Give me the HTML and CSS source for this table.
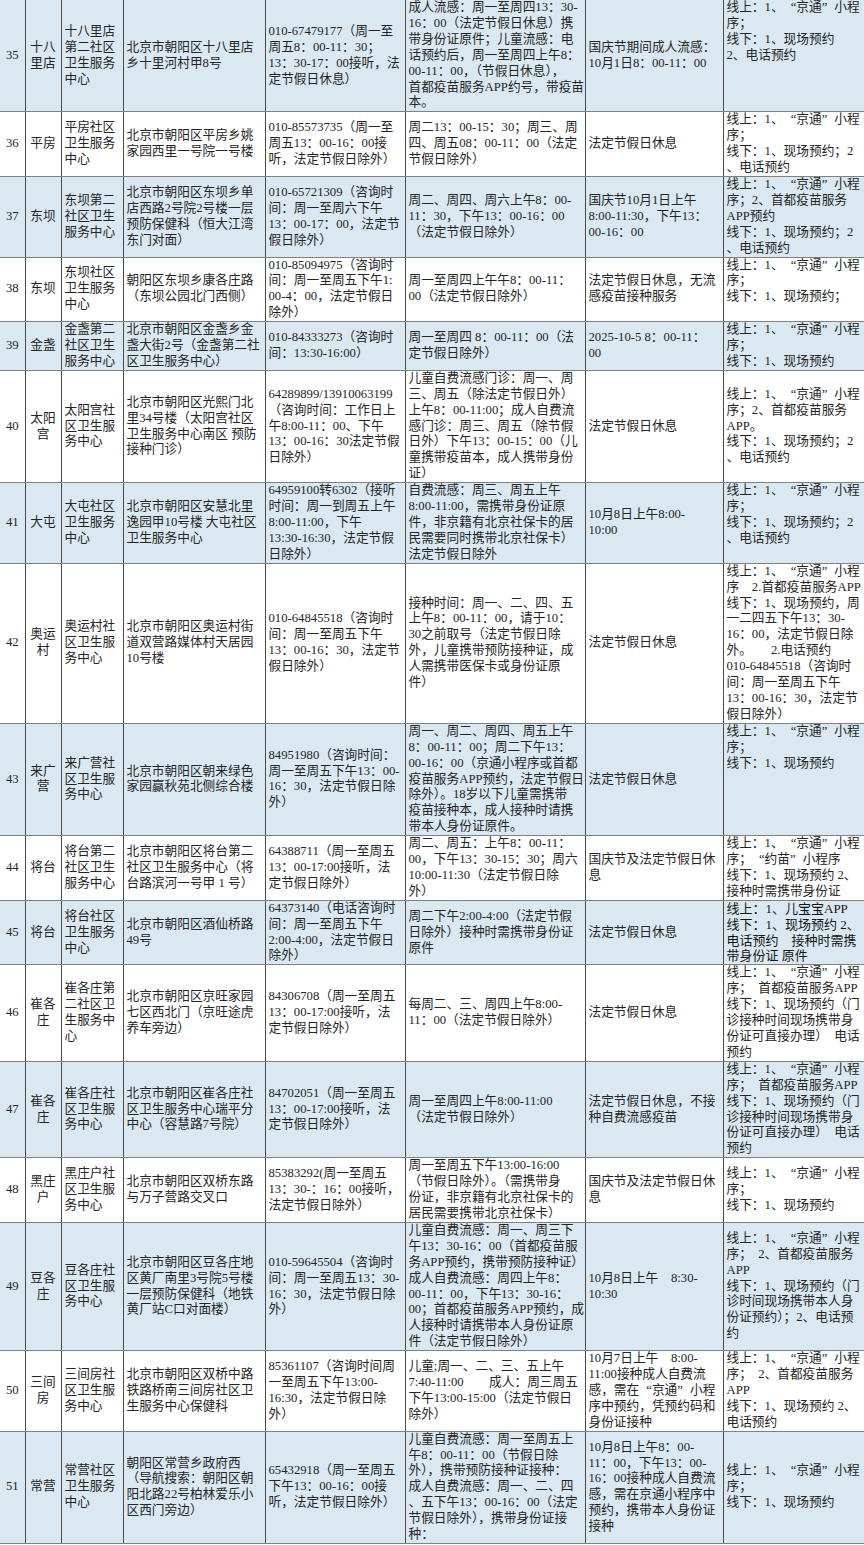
FILE: index.html
```html
<!DOCTYPE html>
<html lang="zh-CN">
<head>
<meta charset="utf-8">
<title>朝阳区流感疫苗接种点</title>
<link rel="stylesheet" href="styles.css">
</head>
<body>
<table class="grid">
<colgroup>
<col class="w-no"><col class="w-town"><col class="w-name"><col class="w-addr"><col class="w-tel"><col class="w-time"><col class="w-hol"><col class="w-book">
</colgroup>
<tbody>
<tr class="b">
<td class="n">35</td>
<td class="t">十八<br>里店</td>
<td>十八里店<br>第二社区<br>卫生服务<br>中心</td>
<td>北京市朝阳区十八里店<br>乡十里河村甲8号</td>
<td>010-67479177（周一至<br>周五8：00-11：30；<br>13：30-17：00接听，法<br>定节假日休息）</td>
<td>成人流感：周一至周四13：30-<br>16：00（法定节假日休息）携<br>带身份证原件；儿童流感：电<br>话预约后，周一至周四上午8：<br>00-11：00，（节假日休息），<br>首都疫苗服务APP约号，带疫苗<br>本。</td>
<td>国庆节期间成人流感：<br>10月1日8：00-11：00</td>
<td class="top">线上：1、<span class="lq">“</span>京通<span class="rq">”</span>小程<br>序；<br>线下：1、现场预约<br>2、电话预约</td>
</tr>
<tr>
<td class="n">36</td>
<td class="t">平房</td>
<td>平房社区<br>卫生服务<br>中心</td>
<td>北京市朝阳区平房乡姚<br>家园西里一号院一号楼</td>
<td>010-85573735（周一至<br>周五13：00-16：00接<br>听，法定节假日除外）</td>
<td>周二13：00-15：30；周三、周<br>四、周五08：00-11：00（法定<br>节假日除外）</td>
<td>法定节假日休息</td>
<td>线上：1、<span class="lq">“</span>京通<span class="rq">”</span>小程<br>序；<br>线下：1、现场预约；2<br>、电话预约</td>
</tr>
<tr class="b">
<td class="n">37</td>
<td class="t">东坝</td>
<td>东坝第二<br>社区卫生<br>服务中心</td>
<td>北京市朝阳区东坝乡单<br>店西路2号院2号楼一层<br>预防保健科（恒大江湾<br>东门对面）</td>
<td>010-65721309（咨询时<br>间：周一至周六下午<br>13：00-17：00，法定节<br>假日除外）</td>
<td>周二、周四、周六上午8：00-<br>11：30，下午13：00-16：00<br>（法定节假日除外）</td>
<td>国庆节10月1日上午<br>8:00-11:30，下午13：<br>00-16：00</td>
<td>线上：1、<span class="lq">“</span>京通<span class="rq">”</span>小程<br>序；2、首都疫苗服务<br>APP预约<br>线下：1、现场预约；2<br>、电话预约</td>
</tr>
<tr>
<td class="n">38</td>
<td class="t">东坝</td>
<td>东坝社区<br>卫生服务<br>中心</td>
<td>朝阳区东坝乡康各庄路<br>（东坝公园北门西侧）</td>
<td>010-85094975（咨询时<br>间：周一至周五下午1:<br>00-4：00，法定节假日<br>除外）</td>
<td>周一至周四上午午8：00-11：<br>00（法定节假日除外）</td>
<td>法定节假日休息，无流<br>感疫苗接种服务</td>
<td class="top">线上：1、<span class="lq">“</span>京通<span class="rq">”</span>小程<br>序；<br>线下：1、现场预约；</td>
</tr>
<tr class="b">
<td class="n">39</td>
<td class="t">金盏</td>
<td>金盏第二<br>社区卫生<br>服务中心</td>
<td>北京市朝阳区金盏乡金<br>盏大街2号（金盏第二社<br>区卫生服务中心）</td>
<td>010-84333273（咨询时<br>间：13:30-16:00）</td>
<td>周一至周四 8：00-11：00（法<br>定节假日除外）</td>
<td>2025-10-5 8：00-11：<br>00</td>
<td>线上：1、<span class="lq">“</span>京通<span class="rq">”</span>小程<br>序；<br>线下：1、现场预约</td>
</tr>
<tr>
<td class="n">40</td>
<td class="t">太阳<br>宫</td>
<td>太阳宫社<br>区卫生服<br>务中心</td>
<td>北京市朝阳区光熙门北<br>里34号楼（太阳宫社区<br>卫生服务中心南区 预防<br>接种门诊）</td>
<td>64289899/13910063199<br>（咨询时间：工作日上<br>午8:00-11：00、下午<br>13：00-16：30法定节假<br>日除外）</td>
<td>儿童自费流感门诊：周一、周<br>三、周五（除法定节假日外）<br>上午8：00-11:00；成人自费流<br>感门诊：周三、周五（除节假<br>日外）下午13：00-15：00（儿<br>童携带疫苗本，成人携带身份<br>证）</td>
<td>法定节假日休息</td>
<td>线上：1、<span class="lq">“</span>京通<span class="rq">”</span>小程<br>序；2、首都疫苗服务<br>APP。<br>线下：1、现场预约；2<br>、电话预约</td>
</tr>
<tr class="b">
<td class="n">41</td>
<td class="t">大屯</td>
<td>大屯社区<br>卫生服务<br>中心</td>
<td>北京市朝阳区安慧北里<br>逸园甲10号楼 大屯社区<br>卫生服务中心</td>
<td>64959100转6302（接听<br>时间：周一到周五上午<br>8:00-11:00，下午<br>13:30-16:30，法定节假<br>日除外）</td>
<td>自费流感：周三、周五上午<br>8:00-11:00，需携带身份证原<br>件，非京籍有北京社保卡的居<br>民需要同时携带北京社保卡）<br>法定节假日除外</td>
<td>10月8日上午8:00-<br>10:00</td>
<td class="top">线上：1、<span class="lq">“</span>京通<span class="rq">”</span>小程<br>序；<br>线下：1、现场预约；2<br>、电话预约</td>
</tr>
<tr>
<td class="n">42</td>
<td class="t">奥运<br>村</td>
<td>奥运村社<br>区卫生服<br>务中心</td>
<td>北京市朝阳区奥运村街<br>道双营路媒体村天居园<br>10号楼</td>
<td>010-64845518（咨询时<br>间：周一至周五下午<br>13：00-16：30，法定节<br>假日除外）</td>
<td>接种时间：周一、二、四、五<br>上午8：00-11：00，请于10：<br>30之前取号（法定节假日除<br>外，儿童携带预防接种证，成<br>人需携带医保卡或身份证原<br>件）</td>
<td>法定节假日休息</td>
<td>线上：1、<span class="lq">“</span>京通<span class="rq">”</span>小程<br>序　2.首都疫苗服务APP<br>线下：1、现场预约，周<br>一二四五下午13：30-<br>16：00，法定节假日除<br>外。　　2.电话预约<br>010-64845518（咨询时<br>间：周一至周五下午<br>13：00-16：30，法定节<br>假日除外）</td>
</tr>
<tr class="b">
<td class="n">43</td>
<td class="t">来广<br>营</td>
<td>来广营社<br>区卫生服<br>务中心</td>
<td>北京市朝阳区朝来绿色<br>家园赢秋苑北侧综合楼</td>
<td>84951980（咨询时间：<br>周一至周五下午13：00-<br>16：30，法定节假日除<br>外）</td>
<td>周一、周二、周四、周五上午<br>8：00-11：00；周二下午13：<br>00-16：00（京通小程序或首都<br>疫苗服务APP预约，法定节假日<br>除外）。18岁以下儿童需携带<br>疫苗接种本，成人接种时请携<br>带本人身份证原件。</td>
<td>法定节假日休息</td>
<td class="top">线上：1、<span class="lq">“</span>京通<span class="rq">”</span>小程<br>序；<br>线下：1、现场预约</td>
</tr>
<tr>
<td class="n">44</td>
<td class="t">将台</td>
<td>将台第二<br>社区卫生<br>服务中心</td>
<td>北京市朝阳区将台第二<br>社区卫生服务中心（将<br>台路滨河一号甲 1 号）</td>
<td>64388711（周一至周五<br>13：00-17:00接听，法<br>定节假日除外）</td>
<td>周二、周五：上午8：00-11：<br>00，下午13：30-15：30；周六<br>10:00-11:30（法定节假日除<br>外）</td>
<td>国庆节及法定节假日休<br>息</td>
<td>线上：1、<span class="lq">“</span>京通<span class="rq">”</span>小程<br>序；<span class="lq">“</span>约苗<span class="rq">”</span>小程序<br>线下：1、现场预约 2、<br>接种时需携带身份证</td>
</tr>
<tr class="b">
<td class="n">45</td>
<td class="t">将台</td>
<td>将台社区<br>卫生服务<br>中心</td>
<td>北京市朝阳区酒仙桥路<br>49号</td>
<td>64373140（电话咨询时<br>间：周一至周五下午<br>2:00-4:00，法定节假日<br>除外）</td>
<td>周二下午2:00-4:00（法定节假<br>日除外）接种时需携带身份证<br>原件</td>
<td>法定节假日休息</td>
<td class="alt">线上：1、儿宝宝APP<br>线下：1、现场预约 2、<br>电话预约　接种时需携<br>带身份证 原件</td>
</tr>
<tr>
<td class="n">46</td>
<td class="t">崔各<br>庄</td>
<td>崔各庄第<br>二社区卫<br>生服务中<br>心</td>
<td>北京市朝阳区京旺家园<br>七区西北门（京旺途虎<br>养车旁边）</td>
<td>84306708（周一至周五<br>13：00-17:00接听，法<br>定节假日除外）</td>
<td>每周二、三、周四上午8:00-<br>11：00（法定节假日除外）</td>
<td>法定节假日休息</td>
<td>线上：1、<span class="lq">“</span>京通<span class="rq">”</span>小程<br>序；　首都疫苗服务APP<br>线下：1、现场预约（门<br>诊接种时间现场携带身<br>份证可直接办理）　电话<br>预约</td>
</tr>
<tr class="b">
<td class="n">47</td>
<td class="t">崔各<br>庄</td>
<td>崔各庄社<br>区卫生服<br>务中心</td>
<td>北京市朝阳区崔各庄社<br>区卫生服务中心瑞平分<br>中心（容慧路7号院）</td>
<td>84702051（周一至周五<br>13：00-17:00接听，法<br>定节假日除外）</td>
<td>周一至周四上午8:00-11:00<br>（法定节假日除外）</td>
<td>法定节假日休息，不接<br>种自费流感疫苗</td>
<td>线上：1、<span class="lq">“</span>京通<span class="rq">”</span>小程<br>序；　首都疫苗服务APP<br>线下：1、现场预约（门<br>诊接种时间现场携带身<br>份证可直接办理）　电话<br>预约</td>
</tr>
<tr>
<td class="n">48</td>
<td class="t">黑庄<br>户</td>
<td>黑庄户社<br>区卫生服<br>务中心</td>
<td>北京市朝阳区双桥东路<br>与万子营路交叉口</td>
<td>85383292(周一至周五<br>13：30-：16：00接听，<br>法定节假日除外）</td>
<td>周一至周五下午13:00-16:00<br>（节假日除外）。（需携带身<br>份证，非京籍有北京社保卡的<br>居民需要携带北京社保卡）</td>
<td>国庆节及法定节假日休<br>息</td>
<td>线上：1、<span class="lq">“</span>京通<span class="rq">”</span>小程<br>序；<br>线下：1、现场预约</td>
</tr>
<tr class="b">
<td class="n">49</td>
<td class="t">豆各<br>庄</td>
<td>豆各庄社<br>区卫生服<br>务中心</td>
<td>北京市朝阳区豆各庄地<br>区黄厂南里3号院5号楼<br>一层预防保健科（地铁<br>黄厂站C口对面楼）</td>
<td>010-59645504（咨询时<br>间：周一至周五13：30-<br>16：30，法定节假日除<br>外）</td>
<td>儿童自费流感：周一、周三下<br>午13：30-16：00（首都疫苗服<br>务APP预约，携带预防接种证）<br>成人自费流感：周四上午8：<br>00-11：00，下午13：30-16：<br>00；首都疫苗服务APP预约，成<br>人接种时请携带本人身份证原<br>件（法定节假日除外）</td>
<td>10月8日上午　8:30-<br>10:30</td>
<td>线上：1、<span class="lq">“</span>京通<span class="rq">”</span>小程<br>序；　2、首都疫苗服务<br>APP<br>线下：1、现场预约（门<br>诊时间现场携带本人身<br>份证预约）；2、电话预<br>约</td>
</tr>
<tr>
<td class="n">50</td>
<td class="t">三间<br>房</td>
<td>三间房社<br>区卫生服<br>务中心</td>
<td>北京市朝阳区双桥中路<br>铁路桥南三间房社区卫<br>生服务中心保健科</td>
<td>85361107（咨询时间周<br>一至周五下午13:00-<br>16:30，法定节假日除<br>外）</td>
<td>儿童;周一、二、三、五上午<br>7:40-11:00　　成人：周三周五<br>下午13:00-15:00（法定节假日<br>除外）</td>
<td>10月7日上午　8:00-<br>11:00接种成人自费流<br>感，需在<span class="lq">“</span>京通<span class="rq">”</span>小程<br>序中预约，凭预约码和<br>身份证接种</td>
<td>线上：1、<span class="lq">“</span>京通<span class="rq">”</span>小程<br>序；　2、首都疫苗服务<br>APP<br>线下：1、现场预约 2、<br>电话预约</td>
</tr>
<tr class="b">
<td class="n">51</td>
<td class="t">常营</td>
<td>常营社区<br>卫生服务<br>中心</td>
<td>朝阳区常营乡政府西<br>（导航搜索：朝阳区朝<br>阳北路22号柏林爱乐小<br>区西门旁边）</td>
<td>65432918（周一至周五<br>下午13：00-16：00接<br>听，法定节假日除外）</td>
<td>儿童自费流感：周一至周五上<br>午8：00-11：00（节假日除<br>外），携带预防接种证接种：<br>成人自费流感：周一、二、四<br>、五下午13：00-16：00（法定<br>节假日除外），携带身份证接<br>种：</td>
<td>10月8日上午8：00-<br>11：00，下午13：00-<br>16：00接种成人自费流<br>感，需在京通小程序中<br>预约，携带本人身份证<br>接种</td>
<td>线上：1、<span class="lq">“</span>京通<span class="rq">”</span>小程<br>序；<br>线下：1、现场预约</td>
</tr>
</tbody>
</table>
</body>
</html>
```

FILE: styles.css
```css
* { box-sizing: border-box; }

body {
  margin: 0;
  background: #ffffff;
}

.grid {
  border-collapse: collapse;
  table-layout: fixed;
  width: 864px;
  font-family: "Liberation Serif", "Noto Sans CJK SC", serif;
  font-size: 12.7px;
  line-height: 15.9px;
  color: #242424;
}

.w-no { width: 25px; }
.w-town { width: 36px; }
.w-name { width: 62px; }
.w-addr { width: 142px; }
.w-tel { width: 140px; }
.w-time { width: 180px; }
.w-hol { width: 138px; }
.w-book { width: 141px; }

.grid td {
  padding: 0 1px 0 3px;
  vertical-align: middle;
  white-space: nowrap;
  text-align: left;
  border-left: 1px solid #4a4a4a;
  border-bottom: 1px solid #808080;
}

.grid td:first-child { border-left: none; }

.grid tr.b td { background: #dae9f1; }

.grid td.n,
.grid td.t {
  text-align: center;
  padding: 0;
}

.grid td.top { vertical-align: top; }

.grid td.alt {
  font-size: 13px;
  color: #141414;
}

.lq,
.rq {
  display: inline-block;
  width: 12.7px;
}

.lq { text-align: right; }
.rq { text-align: left; }
```
